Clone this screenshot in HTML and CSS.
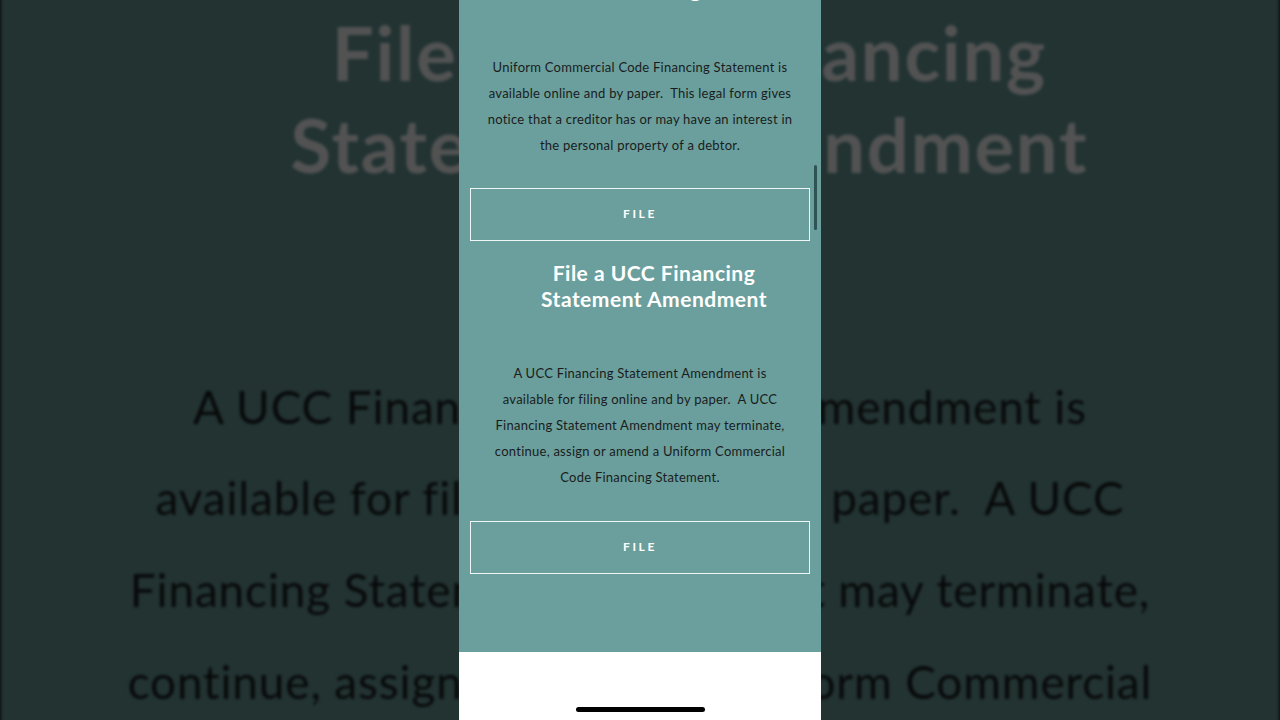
FILE: index.html
```html
<!DOCTYPE html>
<html lang="en">
<head>
  <meta charset="UTF-8">
  <meta name="viewport" content="width=device-width, initial-scale=1.0">
  <title>UCC Filings</title>
  <link rel="stylesheet" href="styles.css">
</head>
<body>
  <div class="backdrop" id="backdrop"></div>

  <div class="screen" id="screen">
    <div class="page">
      <div class="content">
        <section class="filing">
          <h2>File a UCC<br>Financing</h2>
          <p>Uniform Commercial Code Financing Statement is<br>available online and by paper.&nbsp; This legal form gives<br>notice that a creditor has or may have an interest in<br>the personal property of a debtor.</p>
          <a class="file-btn" href="#">FILE</a>
        </section>
        <section class="filing">
          <h2>File a UCC Financing Statement Amendment</h2>
          <p>A UCC Financing Statement Amendment is<br>available for filing online and by paper.&nbsp; A UCC<br>Financing Statement Amendment may terminate,<br>continue, assign or amend a Uniform Commercial<br>Code Financing Statement.</p>
          <a class="file-btn" href="#">FILE</a>
        </section>
      </div>
      <span class="scroll-thumb"></span>
    </div>
    <div class="home-area">
      <span class="home-bar"></span>
    </div>
  </div>

  <script>
    // blurred, zoomed copy of the screen behind it
    const copy = document.getElementById('screen').cloneNode(true);
    copy.removeAttribute('id');
    document.getElementById('backdrop').appendChild(copy);
  </script>
</body>
</html>
```

FILE: styles.css
```css
body {
  margin: 0;
  height: 720px;
  overflow: hidden;
  background: #222f30;
  font-family: Lato, "Open Sans", sans-serif;
  display: flex;
  justify-content: center;
}

.backdrop {
  position: fixed;
  inset: 0;
  overflow: hidden;
  display: flex;
  justify-content: center;
}
.backdrop .screen {
  transform: scale(3.53);
  transform-origin: 50% 50%;
  filter: blur(0.5px);
}
.backdrop::after {
  content: '';
  position: absolute;
  inset: 0;
  background: rgba(0, 0, 0, 0.68);
}

.screen {
  position: relative;
  width: 362px;
  height: 720px;
  flex-shrink: 0;
  display: flex;
  flex-direction: column;
  overflow: hidden;
}

.page {
  position: relative;
  height: 652px;
  background: #6a9f9d;
  overflow: hidden;
}
/* page is scrolled: only the tail of the first heading shows */
.content { margin-top: -50px; }

.filing {
  display: flex;
  flex-direction: column;
  margin-bottom: 19px;
}
.filing h2 {
  margin: 0 0 48px;
  padding: 0 47px 0 75px;
  color: #fff;
  font-size: 21px;
  font-weight: 700;
  letter-spacing: 0.5px;
  line-height: 26px;
  text-align: center;
}
.filing:first-child h2 { margin-bottom: 52px; }
.filing p {
  margin: 0 0 30px;
  padding: 0 10px;
  color: #1a1c1c;
  font-size: 13px;
  letter-spacing: 0.25px;
  line-height: 26px;
  text-align: center;
}
.filing + .filing p { margin-bottom: 31px; }
.file-btn {
  box-sizing: border-box;
  height: 53px;
  margin: 0 11px;
  padding-bottom: 2px;
  border: 1px solid rgba(255, 255, 255, 0.9);
  display: flex;
  align-items: center;
  justify-content: center;
  color: #fff;
  font-size: 12px;
  font-weight: 700;
  letter-spacing: 2.6px;
  text-decoration: none;
}

.scroll-thumb {
  position: absolute;
  top: 165px;
  right: 4px;
  width: 3px;
  height: 65px;
  border-radius: 2px;
  background: #2d5352;
}

.home-area {
  flex: 1;
  background: #fff;
  display: flex;
  justify-content: center;
  padding-top: 55px;
}
.home-bar {
  width: 129px;
  height: 5px;
  border-radius: 3px;
  background: #000;
}
```
